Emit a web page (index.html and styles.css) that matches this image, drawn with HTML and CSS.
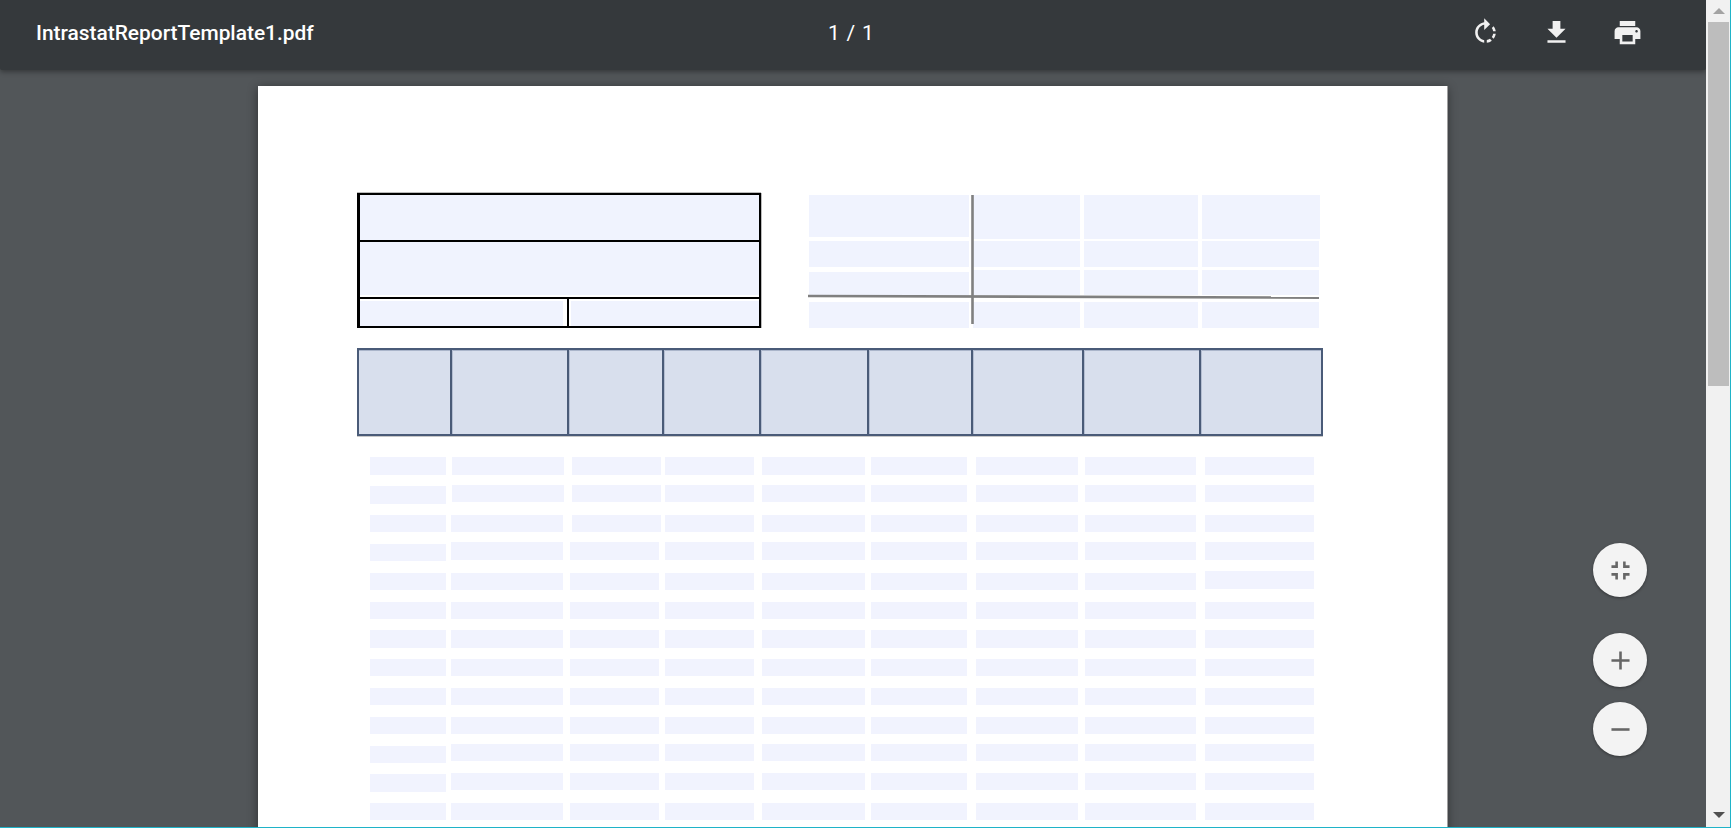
FILE: index.html
```html
<!DOCTYPE html>
<html lang="en">
<head>
<meta charset="utf-8">
<title>IntrastatReportTemplate1.pdf</title>
<link rel="stylesheet" href="styles.css">
</head>
<body>
<div class="app">
  <div class="viewer">
    <header class="toolbar">
      <div class="title">IntrastatReportTemplate1.pdf</div>
      <div class="pageno">1 / 1</div>
      <div class="tools">
        <svg class="icon" viewBox="0 0 24 24"><path d="M15.55 5.55L11 1v3.07C7.06 4.56 4 7.92 4 12s3.05 7.44 7 7.93v-2.02c-2.84-.48-5-2.94-5-5.91s2.16-5.43 5-5.91V10l4.55-4.45zM19.93 11c-.17-1.39-.72-2.73-1.62-3.89l-1.42 1.42c.54.75.88 1.6 1.02 2.47h2.02zM13 17.9v2.02c1.39-.17 2.74-.71 3.9-1.61l-1.44-1.44c-.75.54-1.59.89-2.46 1.03zm3.89-2.42l1.42 1.41c.9-1.16 1.45-2.5 1.62-3.89h-2.02c-.14.87-.48 1.72-1.02 2.48z"/></svg>
        <svg class="icon" viewBox="0 0 24 24"><path d="M19 9h-4V3H9v6H5l7 7 7-7zM5 18v2h14v-2H5z"/></svg>
        <svg class="icon" viewBox="0 0 24 24"><path d="M19 8H5c-1.66 0-3 1.34-3 3v6h4v4h12v-4h4v-6c0-1.66-1.34-3-3-3zm-3 11H8v-5h8v5zm3-7c-.55 0-1-.45-1-1s.45-1 1-1 1 .45 1 1-.45 1-1 1zm-1-9H6v4h12V3z"/></svg>
      </div>
    </header>
    <main class="canvas">
      <section class="page">
        <div class="top">
          <div class="idbox">
            <div class="idrow idrow-a"></div>
            <div class="idrow idrow-b"></div>
            <div class="idrow-c"><i></i><i></i></div>
          </div>
          <div class="summary">
            <div class="sumrow s1"><i></i><i></i><i></i><i></i></div>
            <div class="sumrow s2"><i></i><i></i><i></i><i></i></div>
            <div class="sumrow s3"><i></i><i></i><i></i><i></i></div>
            <div class="sumrow s4"><i></i><i></i><i></i><i></i></div>
            <svg class="cross" viewBox="0 0 514 135"><line x1="163.5" y1="0" x2="163.5" y2="129" /><line x1="-1" y1="101" x2="510" y2="102.6" /></svg>
          </div>
        </div>
        <div class="head"><i></i><i></i><i></i><i></i><i></i><i></i><i></i><i></i><i></i></div>
        <div class="rows">
          <div class="row r1 tall"><i></i><i class="x1"></i><i class="x2"></i><i></i><i></i><i></i><i></i><i></i><i></i></div>
          <div class="row r2"><i class="d1 tall1"></i><i class="x1"></i><i class="x2"></i><i></i><i></i><i></i><i></i><i></i><i></i></div>
          <div class="row r3"><i></i><i></i><i class="x2"></i><i></i><i></i><i></i><i></i><i></i><i></i></div>
          <div class="row r4 tall"><i class="d2 short1"></i><i></i><i></i><i></i><i></i><i></i><i></i><i></i><i></i></div>
          <div class="row r5"><i></i><i></i><i></i><i></i><i></i><i></i><i></i><i></i><i class="u2 tall1"></i></div>
          <div class="row r6"><i></i><i></i><i></i><i></i><i></i><i></i><i></i><i></i><i></i></div>
          <div class="row r7 tall"><i></i><i></i><i></i><i></i><i></i><i></i><i></i><i></i><i></i></div>
          <div class="row r8"><i></i><i></i><i></i><i></i><i></i><i></i><i></i><i></i><i></i></div>
          <div class="row r9"><i></i><i></i><i></i><i></i><i></i><i></i><i></i><i></i><i></i></div>
          <div class="row r10"><i></i><i></i><i></i><i></i><i></i><i></i><i></i><i></i><i></i></div>
          <div class="row r11"><i class="d2"></i><i></i><i></i><i></i><i></i><i></i><i></i><i></i><i></i></div>
          <div class="row r12"><i class="d1 tall1"></i><i></i><i></i><i></i><i></i><i></i><i></i><i></i><i></i></div>
          <div class="row r13"><i></i><i></i><i></i><i></i><i></i><i></i><i></i><i></i><i></i></div>
        </div>
      </section>
      <div class="fabs">
        <button class="fab fab-fit"><svg viewBox="0 0 24 24"><path d="M5 16h3v3h2v-5H5v2zm3-8H5v2h5V5H8v3zm6 11h2v-3h3v-2h-5v5zm2-11V5h-2v5h5V8h-3z"/></svg></button>
        <button class="fab fab-in"><svg viewBox="0 0 24 24"><path d="M19 13h-6v6h-2v-6H5v-2h6V5h2v6h6v2z"/></svg></button>
        <button class="fab"><svg viewBox="0 0 24 24"><path d="M19 13H5v-2h14v2z"/></svg></button>
      </div>
    </main>
  </div>
  <aside class="scrollbar">
    <div class="arrow"></div>
    <div class="thumb"></div>
    <div class="arrow-down"></div>
  </aside>
</div>
</body>
</html>
```

FILE: styles.css
```css
* { box-sizing: border-box; }
html, body { margin: 0; height: 100%; overflow: hidden; }
body { background: #1fb3c8; font-family: Roboto, "Liberation Sans", sans-serif; }

.app { display: flex; width: 1730px; height: 827px; overflow: hidden; }
.viewer { position: relative; width: 1706px; height: 827px; background: #525659; display: flex; flex-direction: column; overflow: hidden; }

.toolbar { position: relative; z-index: 2; flex: none; height: 70px; background: #35393c; color: #fff; box-shadow: 0 2px 5px rgba(0,0,0,.35); display: flex; align-items: flex-start; padding-top: 17px; border-bottom-left-radius: 2px; border-bottom-right-radius: 2px; }
.title { width: 828px; padding-left: 36px; font-size: 20.9px; font-weight: 500; line-height: 33px; white-space: nowrap; }
.pageno { width: 60px; font-size: 21px; line-height: 33px; word-spacing: 1.5px; white-space: nowrap; }
.tools { margin-left: 582px; display: flex; gap: 40px; }
.icon { width: 31px; height: 31px; fill: #f1f1f1; display: block; }

.canvas { position: relative; flex: 1; padding: 16px 0 0 258px; overflow: hidden; }
.page { width: 1189px; height: 1000px; background: #fff; box-shadow: 1px 0 0 #a0a0a0, 0 2px 10px rgba(0,0,0,.45); padding: 107px 0 0 99px; }

.top { display: flex; height: 135px; }
.idbox { width: 404px; height: 135px; border: 2px solid #000; border-left-width: 3px; display: flex; flex-direction: column; box-shadow: 0 -1px 0 #bbb, 1px 0 0 #bbb; }
.idrow { background: #f0f3fe; }
.idrow-a { position: relative; height: 47px; border-bottom: 2px solid #000; box-shadow: 0 1px 0 #999; }
.idrow-b { position: relative; height: 57px; border-bottom: 2px solid #000; box-shadow: inset 0 -2px 0 #fff; }
.idrow-c { position: relative; flex: 1; display: flex; background: #fff; padding-top: 2px; }
.idrow-c i { display: block; background: #f0f3fe; height: 100%; }
.idrow-c i:first-child { width: 203px; }
.idrow-c i:last-child { flex: 1; margin-left: 8px; }
.idrow-c::after { content: ""; position: absolute; left: 206.5px; top: 0; bottom: 0; width: 2.5px; background: #000; }

.summary { position: relative; margin-left: 48px; width: 514px; height: 135px; }
.sumrow { display: flex; position: absolute; left: 0; right: 0; }
.sumrow i { display: block; background: #f0f3fe; }
.sumrow i:nth-child(1) { width: 160px; margin-right: 4px; }
.sumrow i:nth-child(2) { width: 107px; margin-right: 4px; }
.sumrow i:nth-child(3) { width: 114px; margin-right: 4px; }
.sumrow i:nth-child(4) { width: 117px; }
.s1 { top: 2px; height: 44px; }
.s1 i:nth-child(1) { height: 42px; }
.s1 i:nth-child(4) { width: 118px; }
.s2 { top: 48px; height: 26px; }
.s3 { top: 77px; height: 25px; }
.s3 i:nth-child(1) { margin-top: 2px; height: 23px; }
.s4 { top: 109px; height: 26px; }
.cross { position: absolute; left: 0; top: 2px; width: 514px; height: 135px; overflow: visible; }
.cross line { stroke: #808080; stroke-width: 2.6; }

.head { margin-top: 20px; width: 966px; height: 88px; border: 2px solid #4a5b78; background: #d8dfed; display: grid; grid-template-columns: 93px 117px 95px 97px 108px 104px 111px 117px 120px; box-shadow: inset 0 1px 0 #aab5ca, 0 1px 0 #c8c8c8; }
.head i { display: block; border-right: 2.5px solid #4a5b78; box-shadow: 1px 0 0 #b4bed2; }
.head i:last-child { border-right: 0; box-shadow: none; }

.rows { display: flex; flex-direction: column; margin-left: 13px; margin-top: 21px; }
.row { display: grid; grid-template-columns: 81px 119px 95px 97px 109px 105px 109px 120px 109px; height: 17px; flex: none; }
.row i { display: block; height: 17px; background: #f1f3fe; }
.row.tall, .row.tall i { height: 18px; }
.row i:nth-child(1) { width: 76px; }
.row i:nth-child(2) { width: 112px; }
.row i:nth-child(3) { width: 89px; }
.row i:nth-child(4) { width: 89px; }
.row i:nth-child(5) { width: 103px; }
.row i:nth-child(6) { width: 96px; }
.row i:nth-child(7) { width: 102px; }
.row i:nth-child(8) { width: 111px; }
.row i:nth-child(9) { width: 109px; }
.row .x1 { margin-left: 1px; }
.row .x2 { margin-left: 2px; }
.row .d1 { margin-top: 1px; }
.row .d2 { margin-top: 2px; }
.row .u2 { margin-top: -2px; }
.row .tall1 { height: 18px; }
.row.tall .short1 { height: 17px; }
.r2 { margin-top: 10px; }
.r3 { margin-top: 13px; }
.r4 { margin-top: 10px; }
.r5 { margin-top: 13px; }
.r6 { margin-top: 12px; }
.r7 { margin-top: 11px; }
.r8 { margin-top: 11px; }
.r9 { margin-top: 12px; }
.r10 { margin-top: 12px; }
.r11 { margin-top: 10px; }
.r12 { margin-top: 12px; }
.r13 { margin-top: 13px; }

.fabs { position: absolute; left: 1593px; top: 473px; display: flex; flex-direction: column; }
.fab { width: 54px; height: 54px; padding: 11.5px; border: 0; border-radius: 50%; background: #f3f3f3; box-shadow: 0 1px 3px rgba(0,0,0,.4); display: block; margin-bottom: 15px; }
.fab svg { display: block; width: 31px; height: 31px; fill: #666; }
.fab-fit { margin-bottom: 36px; }

.scrollbar { position: relative; width: 24px; height: 827px; background: #f1f1f1; }
.arrow { position: absolute; left: 6.5px; top: 8px; width: 0; height: 0; border-left: 6px solid transparent; border-right: 6px solid transparent; border-bottom: 6px solid #a3a3a3; }
.thumb { position: absolute; left: 2px; top: 22px; width: 21px; height: 364px; background: #bdbdbd; }
.arrow-down { position: absolute; left: 6.5px; bottom: 9px; width: 0; height: 0; border-left: 6px solid transparent; border-right: 6px solid transparent; border-top: 6px solid #505050; }
```
